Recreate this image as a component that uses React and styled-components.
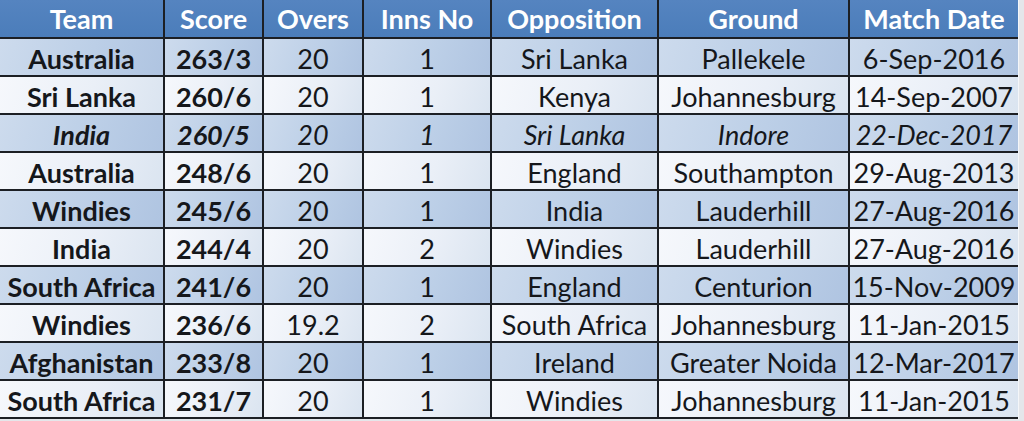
import React from 'react';
import styled, { createGlobalStyle, css } from 'styled-components';

const GlobalStyle = createGlobalStyle`
  html, body {
    margin: 0;
    padding: 0;
    background: #e4e6ea;
  }
`;

const COLUMNS = [
  { key: 'team', label: 'Team', width: 163, bold: true },
  { key: 'score', label: 'Score', width: 97, bold: true },
  { key: 'overs', label: 'Overs', width: 98 },
  { key: 'inns', label: 'Inns No', width: 126 },
  { key: 'opp', label: 'Opposition', width: 165 },
  { key: 'ground', label: 'Ground', width: 189 },
  { key: 'date', label: 'Match Date', width: 168 },
];

// last flag marks the row shown in italics
const ROWS = [
  ['Australia', '263/3', '20', '1', 'Sri Lanka', 'Pallekele', '6-Sep-2016'],
  ['Sri Lanka', '260/6', '20', '1', 'Kenya', 'Johannesburg', '14-Sep-2007'],
  ['India', '260/5', '20', '1', 'Sri Lanka', 'Indore', '22-Dec-2017', true],
  ['Australia', '248/6', '20', '1', 'England', 'Southampton', '29-Aug-2013'],
  ['Windies', '245/6', '20', '1', 'India', 'Lauderhill', '27-Aug-2016'],
  ['India', '244/4', '20', '2', 'Windies', 'Lauderhill', '27-Aug-2016'],
  ['South Africa', '241/6', '20', '1', 'England', 'Centurion', '15-Nov-2009'],
  ['Windies', '236/6', '19.2', '2', 'South Africa', 'Johannesburg', '11-Jan-2015'],
  ['Afghanistan', '233/8', '20', '1', 'Ireland', 'Greater Noida', '12-Mar-2017'],
  ['South Africa', '231/7', '20', '1', 'Windies', 'Johannesburg', '11-Jan-2015'],
];

const App = () => {
  return (
    <>
      <GlobalStyle />
      <Table>
        {COLUMNS.map((col) => (
          <HeadCell key={col.key}>{col.label}</HeadCell>
        ))}
        {ROWS.map((row, i) =>
          COLUMNS.map((col, j) => (
            <Cell
              key={`${i}-${col.key}`}
              $shaded={i % 2 === 0}
              $bold={col.bold}
              $italic={row[7] === true}
            >
              {row[j]}
            </Cell>
          ))
        )}
      </Table>
    </>
  );
};

const Table = styled.div`
  display: grid;
  grid-template-columns: ${COLUMNS.map((c) => `${c.width}px`).join(' ')};
  grid-template-rows: 37px repeat(10, 36px);
  gap: 2px;
  width: 1018px;
  padding-bottom: 2px;
  background: #1c1f24;
  border-right: 1px solid #f4f6f9;
  font-family: Lato, 'Liberation Sans', sans-serif;
`;

const HeadCell = styled.div`
  display: flex;
  align-items: center;
  justify-content: center;
  background: linear-gradient(180deg, #5584c0 0%, #4b7dba 100%);
  color: #ffffff;
  font-size: 27px;
  font-weight: 700;
  white-space: nowrap;
`;

const Cell = styled.div`
  display: flex;
  align-items: center;
  justify-content: center;
  padding-top: 2px;
  white-space: nowrap;
  color: #15171b;
  font-size: 27px;
  font-weight: ${(p) => (p.$bold ? 700 : 400)};
  font-style: ${(p) => (p.$italic ? 'italic' : 'normal')};
  ${(p) =>
    p.$shaded
      ? css`
          background: linear-gradient(110deg, #cddbed 0%, #bccfe7 55%, #afc4e1 100%);
        `
      : css`
          background: linear-gradient(110deg, #f6f8fc 0%, #eaeff7 55%, #dae4f0 100%);
        `}
`;

export default App;
